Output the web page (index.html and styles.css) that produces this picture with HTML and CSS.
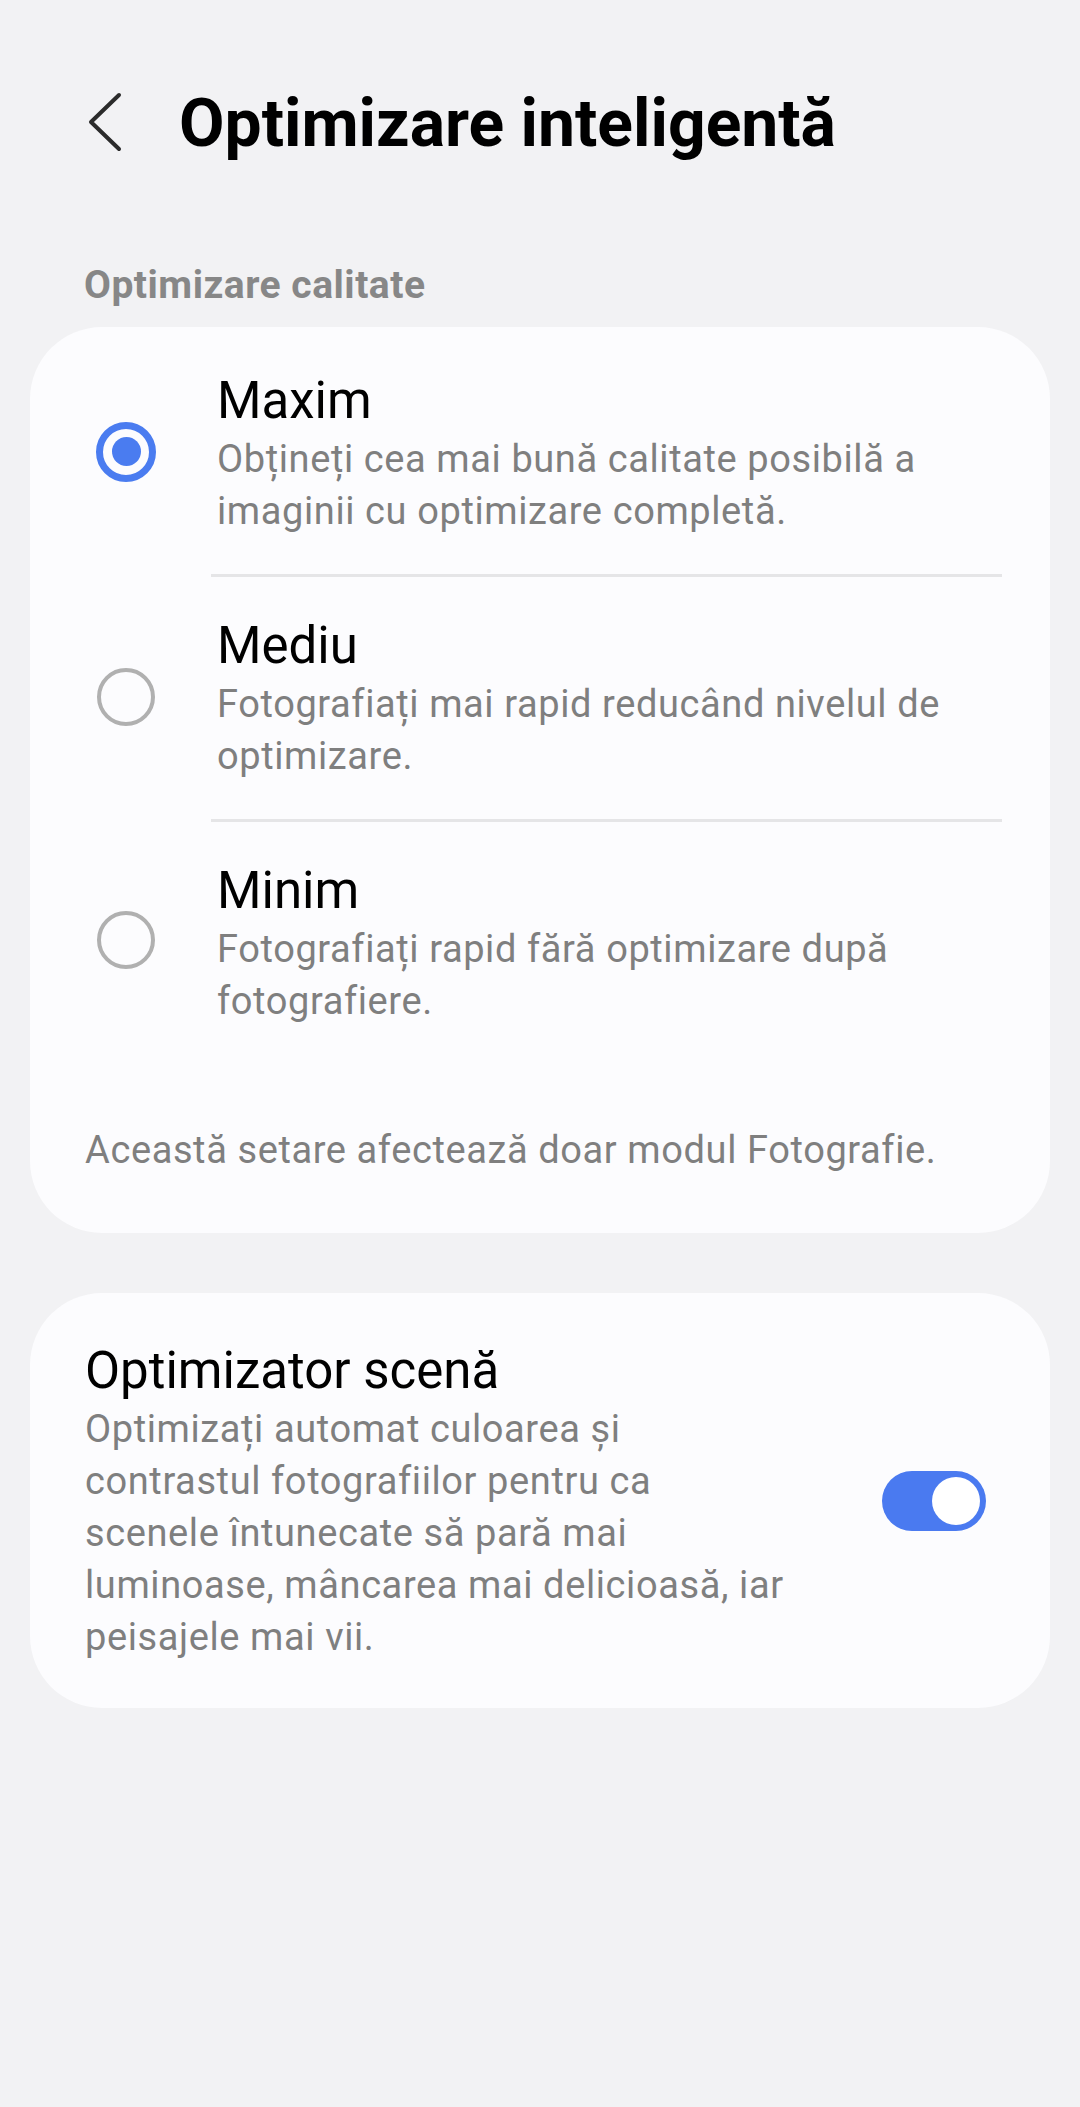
FILE: index.html
```html
<!DOCTYPE html>
<html lang="ro">
<head>
<meta charset="utf-8">
<title>Optimizare inteligentă</title>
<link rel="stylesheet" href="styles.css">
</head>
<body>
<div class="page">
  <header class="appbar">
    <svg class="back" viewBox="0 0 34 60" width="34" height="60" aria-hidden="true">
      <path d="M31 3 L3 30 L31 57" fill="none" stroke="#2b2b2b" stroke-width="4" stroke-linecap="round" stroke-linejoin="round"/>
    </svg>
    <h1 class="title">Optimizare inteligentă</h1>
  </header>

  <div class="section-label">Optimizare calitate</div>

  <section class="card">
    <div class="option">
      <div class="radio-cell"><span class="radio radio-on"><span class="dot"></span></span></div>
      <div class="option-body">
        <div class="item-title">Maxim</div>
        <div class="item-desc">Obțineți cea mai bună calitate posibilă a imaginii cu optimizare completă.</div>
      </div>
    </div>
    <div class="option">
      <div class="radio-cell"><span class="radio"></span></div>
      <div class="option-body">
        <div class="item-title">Mediu</div>
        <div class="item-desc">Fotografiați mai rapid reducând nivelul de optimizare.</div>
      </div>
    </div>
    <div class="option">
      <div class="radio-cell"><span class="radio"></span></div>
      <div class="option-body last">
        <div class="item-title">Minim</div>
        <div class="item-desc">Fotografiați rapid fără optimizare după fotografiere.</div>
      </div>
    </div>
    <p class="card-note">Această setare afectează doar modul Fotografie.</p>
  </section>

  <section class="card card-switch">
    <div class="switch-text">
      <div class="item-title">Optimizator scenă</div>
      <div class="item-desc">Optimizați automat culoarea și<br>contrastul fotografiilor pentru ca<br>scenele întunecate să pară mai<br>luminoase, mâncarea mai delicioasă, iar<br>peisajele mai vii.</div>
    </div>
    <div class="toggle"><span class="knob"></span></div>
  </section>
</div>
</body>
</html>
```

FILE: styles.css
```css
html, body {
  margin: 0;
  padding: 0;
}

body {
  background: #f2f2f4;
  font-family: Roboto, "Noto Sans", "Liberation Sans", sans-serif;
  color: #000;
  width: 1080px;
  min-height: 2107px;
}

.page {
  padding: 0 30px;
}

.appbar {
  display: flex;
  align-items: center;
  height: 80px;
  padding-top: 84px;
  padding-left: 58px;
}

.back {
  flex: none;
  margin-bottom: 4px;
  margin-right: 57px;
}

.title {
  margin: 0;
  font-size: 66px;
  font-weight: 700;
  line-height: 80px;
  color: #000;
}

.section-label {
  margin-top: 97px;
  margin-bottom: 18px;
  padding-left: 54px;
  font-size: 39px;
  font-weight: 700;
  letter-spacing: 0.5px;
  line-height: 48px;
  color: #878787;
}

.card {
  background: #fcfcfe;
  border-radius: 72px;
  padding-top: 5px;
}

.option {
  display: flex;
  align-items: center;
}

.radio-cell {
  flex: none;
  width: 60px;
  padding-left: 66px;
  margin-right: 55px;
  display: flex;
  justify-content: center;
  margin-top: -6px;
}

.radio {
  width: 58px;
  height: 58px;
  box-sizing: border-box;
  border: 4px solid #b0b0b0;
  border-radius: 50%;
  display: flex;
  align-items: center;
  justify-content: center;
}

.radio-on {
  width: 60px;
  height: 60px;
  border: 7px solid #4a7cf0;
}

.dot {
  width: 29px;
  height: 29px;
  border-radius: 50%;
  background: #4a7cf0;
}

.option-body {
  flex: 1;
  margin-right: 48px;
  padding: 37px 0 37px 0;
  border-bottom: 3px solid #e5e5e7;
}

.option-body .item-title,
.option-body .item-desc {
  padding-left: 6px;
}

.option-body.last {
  border-bottom: none;
}

.item-title {
  font-size: 51px;
  line-height: 64px;
  color: #000;
}

.item-desc {
  font-size: 38px;
  letter-spacing: 0.6px;
  line-height: 52px;
  color: #7f7f7f;
}

.card-note {
  margin: 60px 0 0;
  padding: 0 0 57px 55px;
  font-size: 38px;
  letter-spacing: 0.6px;
  line-height: 52px;
  color: #7f7f7f;
}

.card-switch {
  margin-top: 60px;
  display: flex;
  align-items: center;
  padding: 46px 64px 45px 55px;
}

.switch-text {
  flex: 1 1 auto;
  white-space: nowrap;
}

.toggle {
  flex: none;
  margin-left: auto;
  width: 104px;
  height: 60px;
  box-sizing: border-box;
  border-radius: 30px;
  background: #4a7af0;
  display: flex;
  align-items: center;
  justify-content: flex-end;
  padding: 0 6px;
}

.knob {
  width: 48px;
  height: 48px;
  border-radius: 50%;
  background: #fff;
}
```
